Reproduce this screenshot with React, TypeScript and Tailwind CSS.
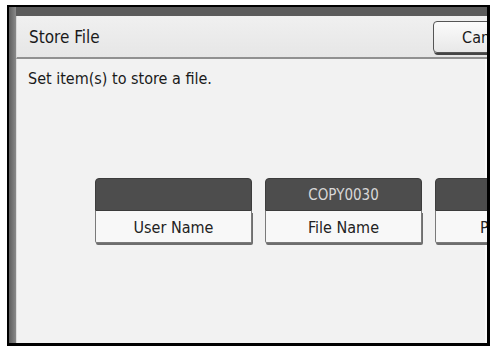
import React from "react";

const font = { fontFamily: '"Liberation Sans Narrow", "DejaVu Sans Condensed", "DejaVu Sans", sans-serif' };

function Card({ top, label }: { top: string; label: string }) {
  return (
    <div className="flex w-[157px] shrink-0 flex-col">
      <div className="flex h-[33px] items-center justify-center rounded-t-[4px] border border-[#3c3c3c] bg-[#4d4d4d] pt-[1px] text-[15px] text-[#d8d8d8]">
        {top}
      </div>
      <div className="flex h-[32px] items-center justify-center rounded-b-[2px] border border-t-0 border-[#7a7a7a] bg-[#f8f8f8] pt-[2px] text-[16px] text-[#222] shadow-[1px_2px_0_#6e6e6e]">
        {label}
      </div>
    </div>
  );
}

export default function App() {
  return (
    <div className="h-[348px] w-[493px] bg-white pl-[7px] pt-[5px]" style={font}>
      <div className="flex h-[341px] w-[483px] overflow-hidden border-b-[3px] border-l-2 border-r-[3px] border-t-2 border-black bg-[#5b5b5b]">
        <div className="w-[7px] shrink-0 bg-gradient-to-r from-[#5e5e5e] to-[#8a8a8a]" />
        <div className="flex min-w-0 flex-1 flex-col overflow-hidden pt-[9px]">
          <div className="flex h-[43px] shrink-0 items-center border-b-2 border-l border-[#909090] border-l-[#d8d8d8] bg-[linear-gradient(#f0f0f0,#e6e6e6)] pl-[12px]">
            <span className="w-[404px] shrink-0 pt-[3px] text-[17px] text-[#1a1a1a]">Store File</span>
            <div className="flex h-[32px] w-[107px] shrink-0 items-center justify-center rounded-[4px] border border-[#555] bg-[linear-gradient(#fbfbfb,#e8e8e8)] pt-[2px] text-[16px] text-[#1a1a1a] shadow-[1px_2px_0_#444]">
              Cancel
            </div>
          </div>
          <div className="flex min-h-0 flex-1 flex-col border-l border-r-2 border-[#dcdcdc] border-r-[#fafafa] bg-[#f2f2f2]">
            <div className="pl-[11px] pt-[10px] text-[16px] leading-[20px] text-[#1a1a1a]">Set item(s) to store a file.</div>
            <div className="flex gap-[13px] pl-[78px] pt-[89px]">
              <Card top="" label="User Name" />
              <Card top="COPY0030" label="File Name" />
              <Card top="" label="Password" />
            </div>
          </div>
        </div>
      </div>
    </div>
  );
}
